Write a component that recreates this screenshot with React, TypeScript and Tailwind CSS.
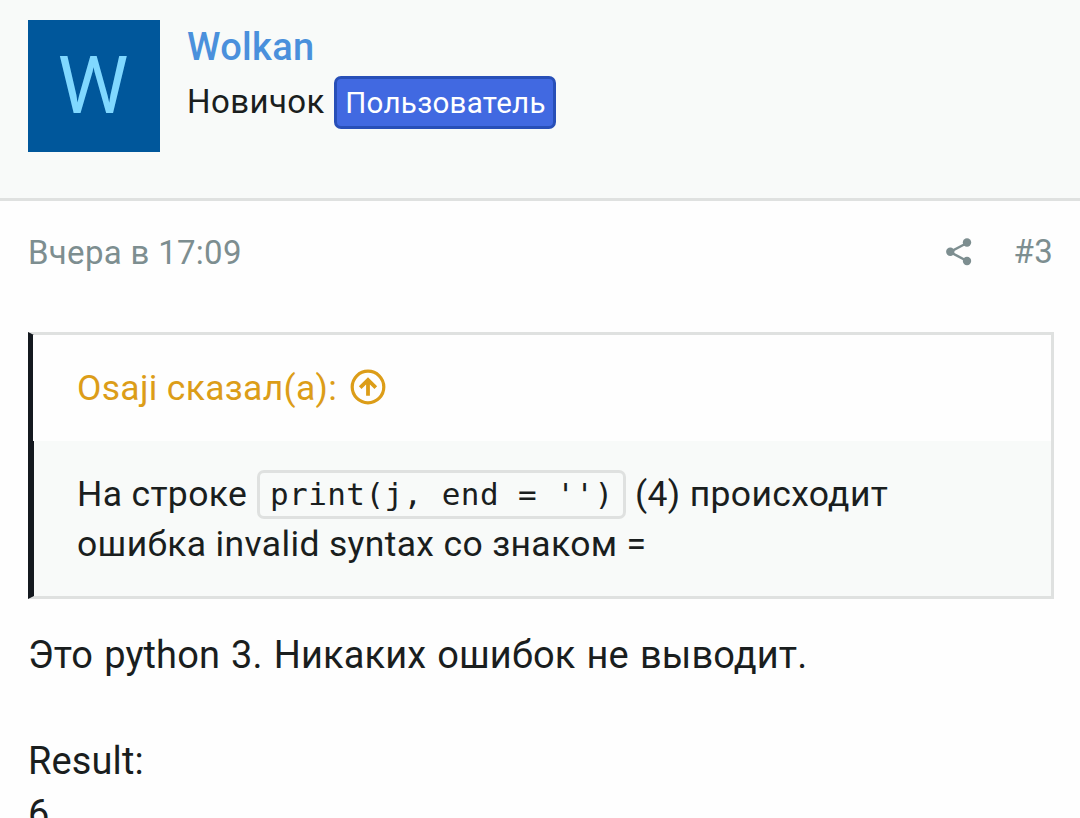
import React from 'react';

const PostHeader: React.FC = () => (
  <header className="flex h-[201px] gap-[27px] border-b-[3px] border-[#dfe1e0] bg-[#f8faf9] px-7 pt-5">
    <div className="flex h-[132px] w-[132px] items-center justify-center bg-[#00579b] pr-[2px] text-[80px] leading-none text-[#80d8ff]">
      W
    </div>
    <div>
      <h4 className="mt-[5px] text-[38px] font-medium leading-[44px] tracking-[0.3px] text-[#4a90dc]">Wolkan</h4>
      <div className="mt-[7px] flex items-center">
        <span className="w-[147px] whitespace-nowrap pb-[2px] text-[33px] leading-[50px] tracking-[0.4px]">Новичок</span>
        <em className="h-[53px] w-[222px] whitespace-nowrap rounded-[7px] border-[3px] border-[#284fb8] bg-[#4169e1] pl-px text-center text-[29.5px] not-italic leading-[48px] tracking-[0.3px] text-white">
          Пользователь
        </em>
      </div>
    </div>
  </header>
);

const ShareIcon: React.FC = () => (
  <svg className="h-[28px] w-[26px]" viewBox="0 0 26 28" fill="#7d8e90">
    <path d="M21 5 4 14l17 9" fill="none" stroke="#7d8e90" strokeWidth="2.5" />
    <circle cx="21" cy="4.5" r="4.2" />
    <circle cx="4.3" cy="13.8" r="4.2" />
    <circle cx="21" cy="23" r="4.2" />
  </svg>
);

const JumpIcon: React.FC = () => (
  <svg className="mb-[2px] h-9 w-9" viewBox="0 0 36 36" fill="none" stroke="#dc9d18">
    <circle cx="18" cy="18" r="15.8" strokeWidth="3.2" />
    <path d="M18 26.8V11M10.2 18.7 18 11l7.8 7.7" strokeWidth="3.8" />
  </svg>
);

const Quote: React.FC = () => (
  <blockquote className="h-[267px] border-[3px] border-l-[6px] border-[#dfe1e0] border-l-[#14191f]">
    <div className="-ml-px flex h-[106px] items-center gap-[13px] bg-[#fefefe] pl-11 text-[35.5px] tracking-[0.3px] text-[#dc9d18]">
      <span className="pt-[2px]">Osaji сказал(а):</span>
      <JumpIcon />
    </div>
    <div className="h-[155px] bg-[#f8faf9] pl-[43px] pt-7 text-[35.5px] leading-[50px] tracking-[0.35px]">
      <div className="flex items-center whitespace-nowrap">
        <span className="w-[180px]">На строке</span>
        <code className="h-[49px] w-[369px] whitespace-pre rounded-[7px] border-[3px] border-[#dfe1e0] pl-[10px] font-['DejaVu_Sans_Mono',monospace] text-[31px] leading-[43px] tracking-[0.42px]">
          print(j, end = '')
        </code>
        <span className="ml-[9px]">(4) происходит</span>
      </div>
      <div>ошибка invalid syntax со знаком =</div>
    </div>
  </blockquote>
);

const App: React.FC = () => (
  <article className="h-[818px] overflow-hidden bg-[#fefefe] font-[Roboto,sans-serif] text-[#1a1e1e]">
    <PostHeader />
    <div className="flex h-[131px] items-center justify-between pb-[30px] pl-7 pr-[27px] text-[33px] tracking-[0.3px] text-[#7d8e90]">
      <span className="pt-[2px]">Вчера в 17:09</span>
      <div className="flex items-center gap-[42px]">
        <ShareIcon />
        <span>#3</span>
      </div>
    </div>
    <div className="pl-7 pr-[26px]">
      <Quote />
      <div className="pt-[30px] text-[38px] leading-[53px] tracking-[0.12px] [word-spacing:1.5px]">
        <p>Это python 3. Никаких ошибок не выводит.</p>
        <br />
        <p>Result:</p>
        <p>6</p>
      </div>
    </div>
  </article>
);

export default App;
